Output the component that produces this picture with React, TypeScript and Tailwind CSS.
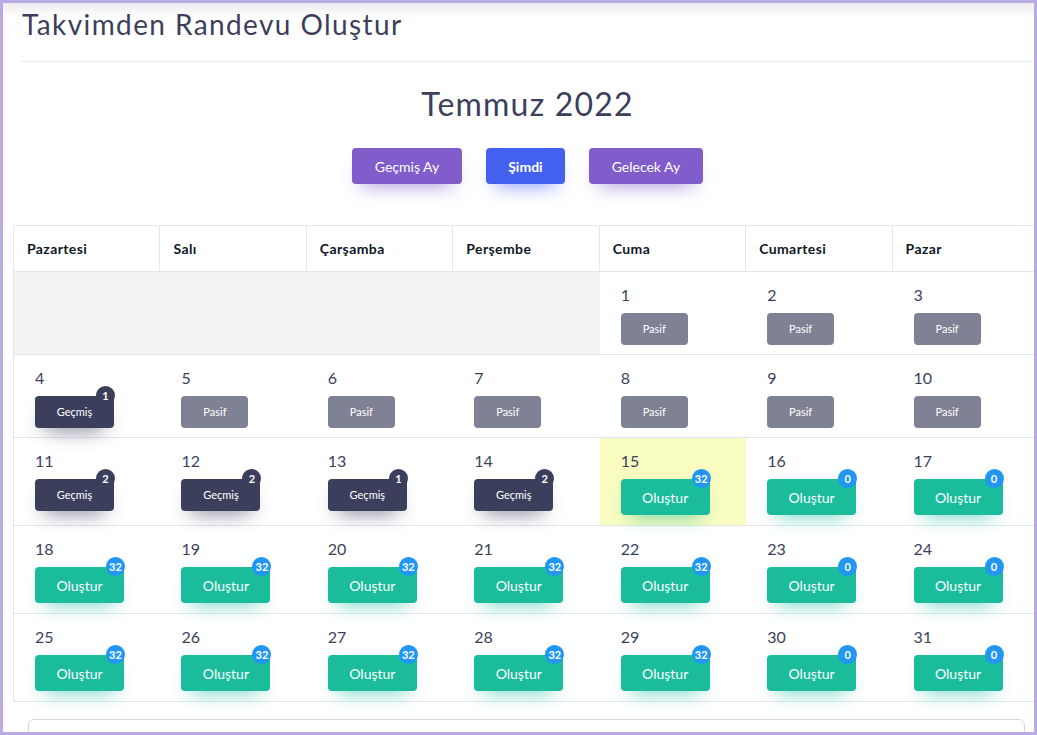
import React from 'react'

type Kind = 'pasif' | 'gecmis' | 'olustur'

type Day = {
  day: number
  kind: Kind
  count?: number
  today?: boolean
}

const weekDays = ['Pazartesi', 'Salı', 'Çarşamba', 'Perşembe', 'Cuma', 'Cumartesi', 'Pazar']

// Temmuz 2022 starts on a Friday, so four empty cells lead the first week
const leadingBlanks = 4

const gecmisCounts: Record<number, number> = { 4: 1, 11: 2, 12: 2, 13: 1, 14: 2 }

const days: Day[] = Array.from({ length: 31 }, (_, i) => {
  const day = i + 1
  if (gecmisCounts[day]) return { day, kind: 'gecmis', count: gecmisCounts[day] }
  if (day < 15) return { day, kind: 'pasif' }
  const weekend = [16, 17, 23, 24, 30, 31].includes(day)
  return { day, kind: 'olustur', count: weekend ? 0 : 32, today: day === 15 }
})

function weeks(): (Day | null)[][] {
  const cells: (Day | null)[] = [...Array(leadingBlanks).fill(null), ...days]
  const out: (Day | null)[][] = []
  for (let i = 0; i < cells.length; i += 7) out.push(cells.slice(i, i + 7))
  return out
}

function Badge({ value, dark }: { value: number; dark?: boolean }) {
  return (
    <span
      className={`absolute -top-[10px] -right-[1px] flex h-[19px] min-w-[19px] items-center justify-center rounded-full px-[3px] text-[11px] font-bold leading-none text-white ${
        dark ? 'bg-[#3b3f5c]' : 'bg-[#2196f3]'
      }`}
    >
      {value}
    </span>
  )
}

function DayButton({ d }: { d: Day }) {
  if (d.kind === 'pasif') {
    return (
      <span className="flex h-[32px] w-[67px] items-center justify-center rounded-[4px] bg-[#7f8194] text-[11px] text-white">
        Pasif
      </span>
    )
  }
  if (d.kind === 'gecmis') {
    return (
      <span className="relative flex h-[32px] w-[79px] items-center justify-center rounded-[4px] bg-[#3b3f5c] text-[11px] text-white shadow-[0_10px_20px_-10px_rgba(59,63,92,0.9)]">
        Geçmiş
        <Badge value={d.count ?? 0} dark />
      </span>
    )
  }
  return (
    <span className="relative flex h-[36px] w-[89px] items-center justify-center rounded-[4px] bg-[#1abc9c] text-[14px] text-white shadow-[0_10px_20px_-10px_rgba(26,188,156,0.75)]">
      Oluştur
      <Badge value={d.count ?? 0} />
    </span>
  )
}

function NavButton({ children, color, bold }: { children: React.ReactNode; color: 'purple' | 'blue'; bold?: boolean }) {
  const tone =
    color === 'purple'
      ? 'px-[23px] bg-[#805dca] shadow-[0_10px_20px_-10px_rgba(128,93,202,0.8)]'
      : 'px-[22px] bg-[#4361ee] shadow-[0_10px_20px_-10px_rgba(67,97,238,0.8)]'
  return (
    <button className={`h-[36px] rounded-[4px] text-[14px] text-white ${bold ? 'font-bold' : ''} ${tone}`}>
      {children}
    </button>
  )
}

export default function App() {
  return (
    <div className="h-[735px] overflow-hidden border-[3px] border-[#b9a9e5] bg-white font-['Lato','Noto_Sans',sans-serif] text-[#3b3f5c]">
      <div className="bg-gradient-to-b from-[#ececef] via-white via-[25%] to-white">
        <h1 className="pl-[19px] pt-[4px] text-[28px] leading-[34px] tracking-[1.4px] text-[#3b3f5c]">
          Takvimden Randevu Oluştur
        </h1>
        <div className="ml-[17px] mr-[2px] mt-[20px] border-b border-[#ebedf2]" />
      </div>

      <div className="pl-[18px]">
        <h2 className="mt-[22px] text-center text-[32px] leading-[40px] tracking-[1.2px] text-[#3b3f5c]">Temmuz 2022</h2>
        <div className="mt-[24px] flex justify-center gap-[24px]">
          <NavButton color="purple">Geçmiş Ay</NavButton>
          <NavButton color="blue" bold>
            Şimdi
          </NavButton>
          <NavButton color="purple">Gelecek Ay</NavButton>
        </div>
      </div>

      <div className="ml-[10px] mt-[41px] w-[1026px]">
        <div className="grid grid-cols-7 border-l border-t border-[#e6e6ef]">
          {weekDays.map((w) => (
            <div
              key={w}
              className="flex h-[46px] items-center border-b border-r border-[#e6e6ef] pl-[13px] text-[14px] font-bold tracking-[0.4px] text-[#0e1726]"
            >
              {w}
            </div>
          ))}
        </div>
        {weeks().map((week, wi) => (
          <div key={wi} className="grid grid-cols-7 border-b border-l border-[#e0e6ed]">
            {week.map((d, di) =>
              d ? (
                <div
                  key={di}
                  className={`flex flex-col items-start gap-[6px] pl-[21px] pt-[11px] ${
                    d.kind === 'olustur' ? 'pb-[10px]' : 'pb-[9px]'
                  } ${d.today ? 'bg-[#f8fcc0]' : ''}`}
                >
                  <span className="text-[16px] leading-[24px] text-[#3b3f5c]">{d.day}</span>
                  <DayButton d={d} />
                </div>
              ) : (
                <div key={di} className="bg-[#f3f3f3]" />
              )
            )}
          </div>
        ))}
      </div>

      <div className="ml-[25px] mr-[9px] mt-[17px] h-[40px] rounded-[6px] border border-[#d9d9d9]" />
    </div>
  )
}
